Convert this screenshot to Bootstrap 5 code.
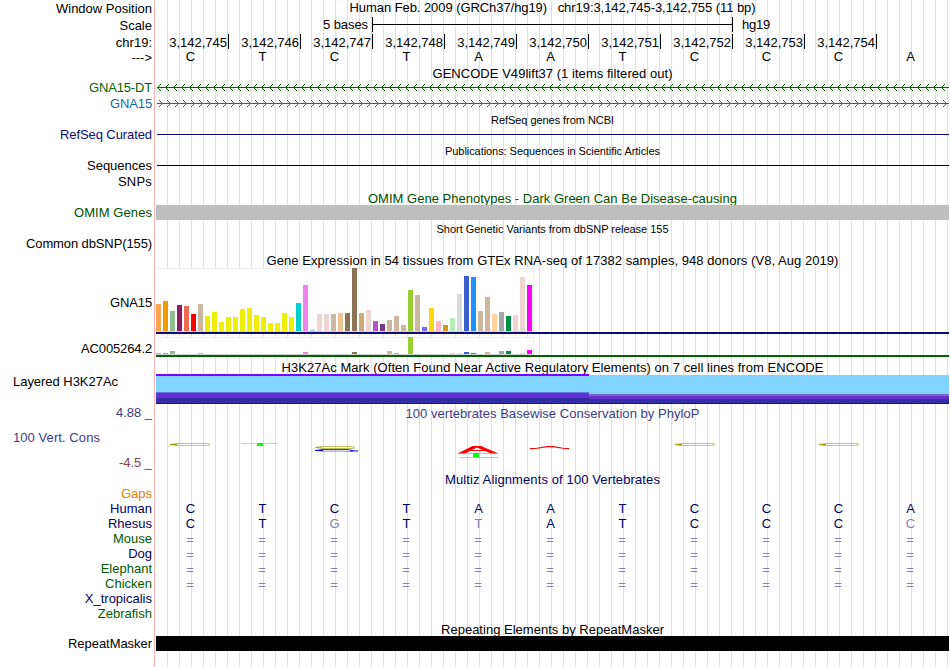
<!doctype html>
<html lang="en">

<head>
    <meta charset="utf-8">
    <meta name="viewport" content="width=device-width, initial-scale=1">
    <title>Genome Browser - chr19:3,142,745-3,142,755</title>
    <link href="https://cdn.jsdelivr.net/npm/bootstrap@5.3.0/dist/css/bootstrap.min.css" rel="stylesheet">
    <style>
        body {
            font-family: "Liberation Sans", Arial, sans-serif;
            font-size: 13px;
            line-height: 15px;
            color: #000;
            background: #fff;
        }

        /* vertical guide lines, every 12px, plus the pink divider */
        .browser {
            width: 950px;
            height: 667px;
            background:
                linear-gradient(#ffb4b4, #ffb4b4) 154px 0 / 1px 100% no-repeat,
                repeating-linear-gradient(90deg, #dcdcff 0, #dcdcff 1px, transparent 1px, transparent 12px) 167px 0 / 783px 100% no-repeat;
        }

        .line { height: 16px; }
        .line-15 { height: 15px; }
        .line-14 { height: 14px; }
        .line-17 { height: 17px; }
        .gtex-tall { height: 69px; }
        .gtex-flat { height: 23px; }
        .h3k { height: 30px; }
        .cons { height: 68px; }
        .rmsk { height: 31px; }

        .side {
            width: 156px;
            padding-right: 4px;
        }

        .lane { width: 793px; }
        .caption-row { padding-right: 0; }
        .small-text { font-size: 11px; padding-top: 1px; }
        .down-1 { padding-top: 1px; }

        .dkgreen { color: #006400; }
        .omim { color: #005000; }
        .gene-blue { color: #0c6cab; }
        .navy { color: #0c0c78; }
        .align-navy { color: #000064; }
        .align-green { color: #005a00; }
        .cons-blue { color: #3c3c8c; }
        .cons-red { color: #8c3c3c; }
        .gap-orange { color: #e68200; }
        .dim { color: #8282b4; }

        .base-cell { width: 72px; padding-right: 3px; }
        .eq-cell { padding: 1px 4px 0 0; }
        .genome-bases { margin-top: -1px; }
        .ruler { padding-left: 1px; }
        .ruler span {
            width: 72px;
            height: 15px;
            padding: 1px 1px 0 0;
            border-right: 1px solid #000;
        }

        .scale-text { width: 216px; padding-right: 4px; }
        .scale-bar {
            width: 361px;
            height: 15px;
            border: solid #000;
            border-width: 0 1px;
            background: linear-gradient(#000, #000) 0 7px / 100% 1px no-repeat;
        }
        .scale-name { padding-left: 9px; }

        .thin { height: 1px; margin: 7px 0 0 1px; }
        .block { height: 15px; }

        .gtex-box {
            width: 378px;
            background: #fff;
            border: solid #eee;
            border-width: 1px 1px 0 0;
            gap: 2px;
        }
        .gtex-box i { width: 5px; flex: none; }
        .gtex-tall .gtex-box { height: 63px; }
        .gtex-flat .gtex-box { height: 17px; }
        .gtex-base { width: 378px; height: 1px; background: #d3d3d3; }
        .gtex-model { height: 2px; }
        .gtex-tall .side { padding-top: 27px; }
        .gtex-flat .side { padding-top: 4px; }

        .side-left { padding-left: 13px; }
        .cons .side { padding-top: 1px; }
        .cons .side div + div { margin-top: 10px; }
        .cons .lane svg { top: 0; left: 0; }
        .cons .caption-row { padding-top: 2px; }
    </style>
</head>

<body>
    <main class="browser overflow-hidden text-nowrap">
        <div class="d-flex line-17">
            <div class="side text-end down-1"><span data-w="96">Window Position</span></div>
            <div class="lane caption-row text-center"><span data-w="406">Human Feb. 2009 (GRCh37/hg19) &nbsp; chr19:3,142,745-3,142,755 (11 bp)</span></div>
        </div>
        <div class="d-flex line-17">
            <div class="side text-end down-1">Scale</div>
            <div class="lane d-flex">
                <div class="scale-text text-end"><span data-w="45">5 bases</span></div>
                <div class="scale-bar"></div>
                <div class="scale-name"><span data-w="28">hg19</span></div>
            </div>
        </div>
        <div class="d-flex line">
            <div class="side text-end down-1">chr19:</div>
            <div class="lane d-flex ruler text-end" id="ruler"></div>
        </div>
        <div class="d-flex line">
            <div class="side text-end">---&gt;</div>
            <div class="lane d-flex genome-bases" data-bases="CTCTAATCCCA"></div>
        </div>

        <div class="d-flex line-14">
            <div class="side"></div>
            <div class="lane caption-row text-center"><span data-w="240">GENCODE V49lift37 (1 items filtered out)</span></div>
        </div>
        <div class="d-flex line">
            <div class="side text-end dkgreen"><span data-w="63">GNA15-DT</span></div>
            <svg class="lane" height="16" shape-rendering="crispEdges">
                <defs>
                    <pattern id="rev" x="1" y="4" width="8" height="7" patternUnits="userSpaceOnUse">
                        <path d="M3 0h1v1h-1zM2 1h1v1h-1zM1 2h1v1h-1zM0 3h1v1h-1zM1 4h1v1h-1zM2 5h1v1h-1zM3 6h1v1h-1z" fill="#006400" />
                    </pattern>
                </defs>
                <rect x="1" y="4" width="790" height="7" fill="url(#rev)" />
                <rect x="1" y="7" width="793" height="1" fill="#006400" />
            </svg>
        </div>
        <div class="d-flex line">
            <div class="side text-end gene-blue"><span data-w="42">GNA15</span></div>
            <svg class="lane" height="16" shape-rendering="crispEdges">
                <defs>
                    <pattern id="fwd" x="3" y="4" width="8" height="7" patternUnits="userSpaceOnUse">
                        <path d="M0 0h1v1h-1zM1 1h1v1h-1zM2 2h1v1h-1zM3 3h1v1h-1zM2 4h1v1h-1zM1 5h1v1h-1zM0 6h1v1h-1z" fill="#0c6cab" />
                    </pattern>
                </defs>
                <rect x="3" y="4" width="790" height="7" fill="url(#fwd)" />
                <rect x="1" y="7" width="793" height="1" fill="#0c6cab" />
            </svg>
        </div>

        <div class="d-flex line-15">
            <div class="side"></div>
            <div class="lane caption-row small-text text-center"><span data-w="123">RefSeq genes from NCBI</span></div>
        </div>
        <div class="d-flex line">
            <div class="side text-end navy"><span data-w="92">RefSeq Curated</span></div>
            <div class="lane"><div class="thin" style="background:#0c0c78"></div></div>
        </div>
        <div class="d-flex line-15">
            <div class="side"></div>
            <div class="lane caption-row small-text text-center"><span data-w="215">Publications: Sequences in Scientific Articles</span></div>
        </div>
        <div class="d-flex line">
            <div class="side text-end"><span data-w="65">Sequences</span></div>
            <div class="lane"><div class="thin bg-black"></div></div>
        </div>
        <div class="d-flex line">
            <div class="side text-end"><span data-w="34">SNPs</span></div>
        </div>

        <div class="d-flex line-15">
            <div class="side"></div>
            <div class="lane caption-row down-1 text-center omim"><span data-w="369">OMIM Gene Phenotypes - Dark Green Can Be Disease-causing</span></div>
        </div>
        <div class="d-flex line">
            <div class="side text-end omim"><span data-w="78">OMIM Genes</span></div>
            <div class="lane block" style="background:#bebebe"></div>
        </div>
        <div class="d-flex line-15">
            <div class="side"></div>
            <div class="lane caption-row small-text text-center"><span data-w="232">Short Genetic Variants from dbSNP release 155</span></div>
        </div>
        <div class="d-flex line">
            <div class="side text-end"><span data-w="126">Common dbSNP(155)</span></div>
        </div>

        <div class="d-flex line">
            <div class="side"></div>
            <div class="lane caption-row down-1 text-center"><span data-w="572">Gene Expression in 54 tissues from GTEx RNA-seq of 17382 samples, 948 donors (V8, Aug 2019)</span></div>
        </div>
        <div class="d-flex gtex-tall">
            <div class="side text-end"><span data-w="42">GNA15</span></div>
            <div class="lane">
                <div class="gtex-box d-flex align-items-end" id="gna15"></div>
                <div class="gtex-base"></div>
                <div class="gtex-model" style="background:#0c0c78"></div>
            </div>
        </div>
        <div class="d-flex gtex-flat">
            <div class="side text-end"><span data-w="71">AC005264.2</span></div>
            <div class="lane">
                <div class="gtex-box d-flex align-items-end" id="ac005264"></div>
                <div class="gtex-base"></div>
                <div class="gtex-model" style="background:#006400"></div>
            </div>
        </div>

        <div class="d-flex line-14">
            <div class="side"></div>
            <div class="lane caption-row text-center"><span data-w="542">H3K27Ac Mark (Often Found Near Active Regulatory Elements) on 7 cell lines from ENCODE</span></div>
        </div>
        <div class="d-flex h3k">
            <div class="side side-left"><span data-w="105">Layered H3K27Ac</span></div>
            <svg class="lane" height="30" shape-rendering="crispEdges">
                <rect x="0" y="1" width="794" height="19" fill="#80d4ff" />
                <rect x="0" y="0" width="433" height="2" fill="#8000ff" />
                <rect x="0" y="18" width="433" height="1" fill="#5a78e6" />
                <rect x="0" y="19" width="433" height="5" fill="#6633d0" />
                <rect x="0" y="24" width="433" height="5" fill="#332da8" />
                <rect x="433" y="20" width="361" height="2" fill="#7a66cc" />
                <rect x="433" y="22" width="361" height="3" fill="#6633d0" />
                <rect x="433" y="25" width="361" height="4" fill="#332da8" />
                <rect x="0" y="29" width="794" height="1" fill="#14148c" />
            </svg>
        </div>

        <div class="d-flex cons">
            <div class="side side-left cons-blue">
                <div class="text-end"><span data-w="36">4.88 _</span></div>
                <div><span data-w="87">100 Vert. Cons</span></div>
                <div class="text-end cons-red"><span data-w="33">-4.5 _</span></div>
            </div>
            <div class="lane position-relative">
                <div class="caption-row text-center cons-blue"><span data-w="294">100 vertebrates Basewise Conservation by PhyloP</span></div>
                <!-- conservation logo: letters squashed to their score -->
                <svg class="position-absolute" width="793" height="68" fill="none">
                    <g id="flatC" stroke="#a0a000">
                        <path d="M15 40.5L20 39.5H51L54 40.2" stroke-opacity=".6" />
                        <path d="M15 40.5L20 41.5H51L54 40.8" stroke-opacity=".6" />
                        <path d="M14 40.5H21" stroke-width="1.2" />
                    </g>
                    <use href="#flatC" x="505" />
                    <use href="#flatC" x="649" />
                    <path d="M85 39.5H122" stroke="#00ff00" stroke-opacity=".45" />
                    <rect x="101" y="39" width="6" height="3" fill="#00ff00" />
                    <g stroke="#a0a000" stroke-opacity=".65">
                        <path d="M160 43.5L166 42.5H195L199 43.2" />
                        <path d="M160 43.5L166 44.5H196L199 44" />
                        <path d="M159 43.5H166" />
                    </g>
                    <g stroke="#0000ff">
                        <path d="M160 46.5L166 45.5H191L197 46.5" stroke-opacity=".8" />
                        <path d="M160 46.5L167 47.1H188L197 47.5" stroke-opacity=".45" />
                        <path d="M159 46.5H167M194 46.9H202" />
                    </g>
                    <path d="M301.5 49.5L316.5 42H325L342.5 49.5H335L321 43.6L309 49.5Z" fill="#ff0000" />
                    <path d="M312 46.5H331" stroke="#ff0000" />
                    <path d="M302 49.5H339" stroke="#00ff00" stroke-opacity=".6" />
                    <rect x="317" y="49" width="6" height="4" fill="#00ff00" />
                    <path d="M304 53.5H342" stroke="#a0a000" stroke-opacity=".5" />
                    <path d="M374 44.6L381 44.2L391 42.6H397L407 44.2L413 44.6" stroke="#ff0000" stroke-width="1.1" />
                </svg>
            </div>
        </div>

        <div class="d-flex line-14">
            <div class="side"></div>
            <div class="lane caption-row text-center align-navy"><span data-w="215">Multiz Alignments of 100 Vertebrates</span></div>
        </div>
        <div class="d-flex line-15 gap-orange">
            <div class="side text-end">Gaps</div>
        </div>
        <div class="d-flex line-15 align-navy">
            <div class="side text-end">Human</div>
            <div class="lane d-flex" data-bases="CTCTAATCCCA"></div>
        </div>
        <div class="d-flex line-15 align-navy">
            <div class="side text-end">Rhesus</div>
            <div class="lane d-flex" data-bases="CTgTtATCCCc"></div>
        </div>
        <div class="d-flex line-15 align-green">
            <div class="side text-end">Mouse</div>
            <div class="lane d-flex" data-bases="==========="></div>
        </div>
        <div class="d-flex line-15 align-navy">
            <div class="side text-end">Dog</div>
            <div class="lane d-flex" data-bases="==========="></div>
        </div>
        <div class="d-flex line-15 align-green">
            <div class="side text-end">Elephant</div>
            <div class="lane d-flex" data-bases="==========="></div>
        </div>
        <div class="d-flex line-15 align-green">
            <div class="side text-end">Chicken</div>
            <div class="lane d-flex" data-bases="==========="></div>
        </div>
        <div class="d-flex line-15 align-navy">
            <div class="side text-end">X_tropicalis</div>
        </div>
        <div class="d-flex line-15 align-green">
            <div class="side text-end">Zebrafish</div>
        </div>

        <div class="d-flex line-15">
            <div class="side"></div>
            <div class="lane caption-row down-1 text-center"><span data-w="223">Repeating Elements by RepeatMasker</span></div>
        </div>
        <div class="d-flex rmsk">
            <div class="side text-end"><span data-w="84">RepeatMasker</span></div>
            <div class="lane block bg-black"></div>
        </div>
    </main>

    <script>
        // Ruler positions
        const ruler = document.getElementById("ruler");
        for (let pos = 3142745; pos <= 3142754; pos++) {
            const tick = document.createElement("span");
            tick.textContent = pos.toLocaleString("en-US");
            ruler.appendChild(tick);
        }

        // One cell per base, lower case means a mismatch
        document.querySelectorAll("[data-bases]").forEach(function(lane) {
            for (const base of lane.dataset.bases) {
                const cell = document.createElement("span");
                cell.className = "base-cell text-center";
                if (base === "=") {
                    cell.classList.add("eq-cell");
                }
                if (base === "=" || base !== base.toUpperCase()) {
                    cell.classList.add("dim");
                }
                cell.textContent = base.toUpperCase();
                lane.appendChild(cell);
            }
        });

        // GTEx tissue colors and bar heights
        const colors = ["#ffa54f", "#ee9a00", "#8fbc8f", "#8b1c62", "#ee6a50", "#ff0000", "#cdb79e",
            "#eeee00", "#eeee00", "#eeee00", "#eeee00", "#eeee00", "#eeee00", "#eeee00", "#eeee00", "#eeee00", "#eeee00", "#eeee00", "#eeee00", "#eeee00",
            "#00cdcd", "#ee82ee", "#9ac0cd", "#eed5d2", "#eed5d2", "#cdb79e", "#eec591", "#8b7355", "#8b7355", "#cdaa7d", "#eed5d2",
            "#b452cd", "#7a378b", "#cdb79e", "#cdb79e", "#cdb79e", "#9acd32", "#cdb79e", "#7a67ee", "#ffd700", "#ffb6c1", "#cd9b1d",
            "#b4eeb4", "#d9d9d9", "#3a5fcd", "#1e90ff", "#cdb79e", "#cdb79e", "#ffd39b", "#a6a6a6", "#008b45", "#eed5d2", "#eed5d2", "#ff00ff"];
        const gna15 = [27, 30, 20, 26, 25, 17, 27, 15, 19, 9, 14, 14, 22, 23, 16, 14, 8, 8, 18, 14, 28, 46, 1, 17, 17, 17, 18,
            18, 63, 18, 21, 10, 7, 11, 15, 6, 41, 36, 4, 23, 10, 6, 13, 37, 55, 54, 20, 34, 17, 19, 15, 16, 54, 46];
        const ac005264 = [1, 1, 3, 0, 0, 0, 1, 0, 0, 0, 0, 0, 0, 0, 0, 0, 0, 0, 0, 0, 0, 2, 0, 0, 0, 0, 0,
            0, 2, 0, 0, 0, 0, 3, 1, 0, 17, 0, 0, 0, 0, 0, 1, 1, 2, 1, 0, 2, 0, 3, 3, 0, 1, 4];

        function drawBars(id, heights) {
            document.getElementById(id).innerHTML = heights.map(function(h, i) {
                return '<i style="height:' + h + 'px;background:' + colors[i] + '"></i>';
            }).join("");
        }
        drawBars("gna15", gna15);
        drawBars("ac005264", ac005264);

        // Spread each text over its set width
        document.querySelectorAll("[data-w]").forEach(function(el) {
            const diff = el.dataset.w - el.getBoundingClientRect().width;
            el.style.letterSpacing = diff / el.textContent.length + "px";
        });
    </script>
    <script src="https://cdn.jsdelivr.net/npm/bootstrap@5.3.0/dist/js/bootstrap.bundle.min.js"></script>
</body>

</html>
